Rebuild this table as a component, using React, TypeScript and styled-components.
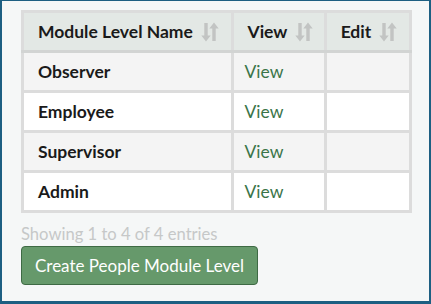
import styled, { createGlobalStyle } from 'styled-components';

const GlobalStyle = createGlobalStyle`
  html, body {
    margin: 0;
    padding: 0;
    background: #ffffff;
  }
  body {
    font-family: Lato, "Liberation Sans", sans-serif;
  }
`;

type Level = { name: string };

const levels: Level[] = [
  { name: 'Observer' },
  { name: 'Employee' },
  { name: 'Supervisor' },
  { name: 'Admin' },
];

const columns = [
  { label: 'Module Level Name', width: '54%' },
  { label: 'View', width: '24%' },
  { label: 'Edit', width: '22%' },
];

function SortIcon() {
  return (
    <StSort viewBox="0 0 18 20" aria-hidden="true">
      {/* down arrow */}
      <path d="M3.3 1h3.4v12.5h3L5 19.5 0.3 13.5h3z" />
      {/* up arrow */}
      <path d="M13 0.5l4.7 6h-3V19h-3.4V6.5h-3z" />
    </StSort>
  );
}

function App() {
  return (
    <>
      <GlobalStyle />
      <StPanel>
        <StTable>
          <colgroup>
            {columns.map((c) => (
              <col key={c.label} style={{ width: c.width }} />
            ))}
          </colgroup>
          <thead>
            <tr>
              {columns.map((c) => (
                <StTh key={c.label}>
                  {c.label}
                  <SortIcon />
                </StTh>
              ))}
            </tr>
          </thead>
          <tbody>
            {levels.map((l, i) => (
              <StRow key={l.name} $odd={i % 2 === 0}>
                <StNameCell>{l.name}</StNameCell>
                <StCell>
                  <StLink href="#">View</StLink>
                </StCell>
                <StCell />
              </StRow>
            ))}
          </tbody>
        </StTable>
        <StInfo>Showing 1 to 4 of 4 entries</StInfo>
        <StButton type="button">Create People Module Level</StButton>
      </StPanel>
    </>
  );
}

export default App;

const StPanel = styled.div`
  box-sizing: border-box;
  width: 431px;
  height: 304px;
  background: #f5f7f7;
  border: 2px solid #1d5f82;
  border-top-width: 1px;
  border-bottom-width: 3px;
  padding: 9px 17px 0 19px;
  display: flex;
  flex-direction: column;
  align-items: flex-start;
`;

const StTable = styled.table`
  border-collapse: collapse;
  width: 391px;
  table-layout: fixed;
  border: 3px solid #dcdcdc;
`;

const StTh = styled.th`
  box-sizing: border-box;
  height: 40px;
  padding: 0 8px 0 14px;
  background: #e3e8e5;
  border: 3px solid #dcdcdc;
  border-bottom-color: #d2d4d3;
  text-align: left;
  font-size: 17.5px;
  font-weight: 700;
  color: #1a1a1a;
  white-space: nowrap;
`;

const StSort = styled.svg`
  width: 18px;
  height: 20px;
  margin-left: 8px;
  vertical-align: -4px;
  fill: #c2c4c3;
`;

const StRow = styled.tr<{ $odd: boolean }>`
  background: ${(p) => (p.$odd ? '#f4f4f4' : '#ffffff')};
`;

const StCell = styled.td`
  box-sizing: border-box;
  height: 40px;
  padding: 0 10px 0 11px;
  border: 3px solid #dcdcdc;
  font-size: 17.5px;
  color: #1a1a1a;
`;

const StNameCell = styled(StCell)`
  padding-left: 14px;
  font-weight: 700;
`;

const StLink = styled.a`
  color: #3a7449;
  text-decoration: none;
`;

const StInfo = styled.div`
  margin-top: 11px;
  font-size: 16.6px;
  line-height: 20px;
  color: #c6c8c8;
`;

const StButton = styled.button`
  margin-top: 2px;
  height: 39px;
  padding: 0 13px;
  background: #66996b;
  border: 1px solid #3e6a44;
  border-radius: 4px;
  color: #ffffff;
  font-family: Lato, "Liberation Sans", sans-serif;
  font-size: 17px;
  cursor: pointer;
`;
